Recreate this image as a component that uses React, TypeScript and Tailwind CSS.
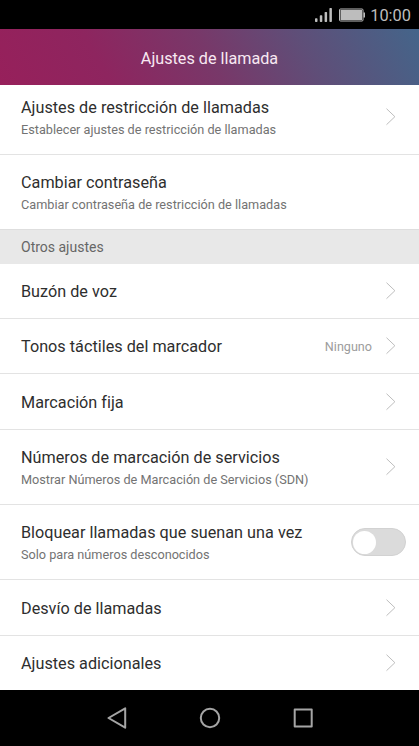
import React from 'react';

type RowProps = {
  title: string;
  subtitle?: string;
  value?: string;
  toggle?: boolean;
  chevron?: boolean;
  className: string;
};

function Chevron() {
  return (
    <svg className="h-[18px] w-[10px] shrink-0" viewBox="0 0 10 18" fill="none" stroke="#bdbdbd" strokeWidth="1">
      <path d="M.5 .7 8.9 8.7 .5 16.7" />
    </svg>
  );
}

function Row({ title, subtitle, value, toggle, chevron = true, className }: RowProps) {
  return (
    <div className={`flex shrink-0 items-center border-[#e3e3e3] pl-[21px] ${toggle ? 'pr-[13px]' : 'pr-[23px]'} ${className}`}>
      <div className={`flex-1 whitespace-nowrap ${subtitle ? 'pt-[3px]' : 'pt-[2px]'}`}>
        <div className="text-[16.2px] leading-[22px] tracking-[0.02px] text-[#2e2e2e]">{title}</div>
        {subtitle && <div className="text-[12.7px] leading-[21px] text-[#737373]">{subtitle}</div>}
      </div>
      {value && <span className="mr-[14px] pt-[2px] text-[12.6px] text-[#9c9c9c]">{value}</span>}
      {toggle ? (
        <button
          role="switch"
          aria-checked="false"
          className="flex h-7 w-[55px] items-center rounded-full border border-[#d2d2d2] bg-[#dbdbdb] pl-px"
        >
          <span className="size-[23px] rounded-full bg-white" />
        </button>
      ) : (
        chevron && <Chevron />
      )}
    </div>
  );
}

export default function App() {
  return (
    <div className="flex h-[746px] w-[419px] flex-col overflow-hidden bg-white font-['Roboto',sans-serif]">
      <div className="flex h-[29px] shrink-0 items-center justify-end bg-black pr-[8px] text-[#bdbdbd]">
        <svg className="mr-[6px] h-[16px] w-[18px]" viewBox="0 0 18 16" fill="#bdbdbd">
          <rect x="1" y="11.2" width="2.5" height="3.8" rx=".7" />
          <rect x="5.8" y="8.3" width="2.5" height="6.7" rx=".7" />
          <rect x="10.6" y="5" width="2.5" height="10" rx=".7" />
          <rect x="15.4" y="1" width="2.5" height="14" rx=".7" />
        </svg>
        <svg className="mr-[5px] h-[14px] w-[27px]" viewBox="0 0 27 14" fill="#bdbdbd">
          <rect x="1.5" y="1" width="23.5" height="12" rx="1" fill="none" stroke="#bdbdbd" />
          <rect x="2.5" y="2" width="21.5" height="10" />
          <rect x="25.5" y="4.5" width="1.5" height="5" />
        </svg>
        <span className="pt-[2px] text-[16.4px] leading-[27px]">10:00</span>
      </div>
      <header className="flex h-14 shrink-0 items-center justify-center bg-[linear-gradient(60deg,#97205b_0%,#8e255f_25%,#783869_50%,#5f4e78_72%,#44658a_100%)] pt-[4px] text-[16.2px] text-[#f8e8f2]">
        Ajustes de llamada
      </header>
      <main className="flex flex-col">
        <Row className="h-[70px] border-b pb-[6px]" title="Ajustes de restricción de llamadas" subtitle="Establecer ajustes de restricción de llamadas" />
        <Row className="h-[74px]" title="Cambiar contraseña" subtitle="Cambiar contraseña de restricción de llamadas" chevron={false} />
        <h2 className="flex h-[35px] shrink-0 items-center border-t border-[#dedede] bg-[#e8e8e8] pl-[21px] text-[14px] text-[#666]">Otros ajustes</h2>
        <Row className="h-[55px] border-b" title="Buzón de voz" />
        <Row className="h-[55px] border-b" title="Tonos táctiles del marcador" value="Ninguno" />
        <Row className="h-[56px] border-b" title="Marcación fija" />
        <Row className="h-[75px] border-b" title="Números de marcación de servicios" subtitle="Mostrar Números de Marcación de Servicios (SDN)" />
        <Row className="h-[75px] border-b" title="Bloquear llamadas que suenan una vez" subtitle="Solo para números desconocidos" toggle />
        <Row className="h-[56px] border-b" title="Desvío de llamadas" />
        <Row className="h-[54px]" title="Ajustes adicionales" />
      </main>
      <nav className="flex h-14 shrink-0 items-center bg-black pl-[107px]">
        <svg className="h-[22px] w-[206px]" viewBox="0 0 206 22" fill="none" stroke="#a5a5a5" strokeWidth="2" strokeLinejoin="round">
          <path d="M1.5 11 18.2 1.3V20.7Z" />
          <circle cx="103" cy="11" r="9.2" />
          <rect x="187.7" y="2.5" width="17" height="17" />
        </svg>
      </nav>
    </div>
  );
}
